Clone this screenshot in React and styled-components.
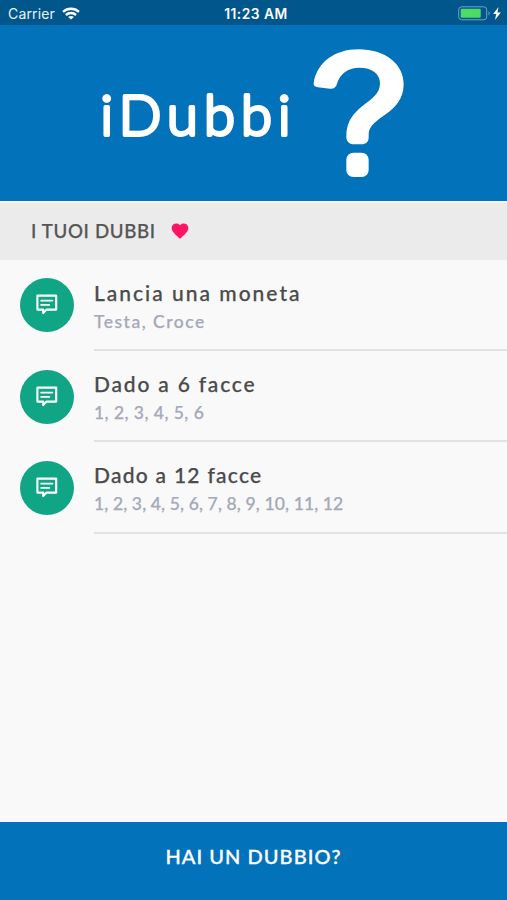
import React from "react";
import styled, { createGlobalStyle } from "styled-components";
import { MdFavorite } from "react-icons/md";

const GlobalStyle = createGlobalStyle`
  * {
    box-sizing: border-box;
  }

  body {
    margin: 0;
    background-color: #f9f9f9;
  }
`;

const MainContainer = styled.div`
  display: flex;
  flex-direction: column;
  height: 900px;
  overflow: hidden;
  background-color: #f9f9f9;
  font-family: Lato, "Open Sans", sans-serif;
`;

const StatusBar = styled.div`
  display: grid;
  grid-template-columns: 1fr auto 1fr;
  align-items: center;
  height: 25px;
  flex: none;
  padding: 2px 5px 0 8px;
  background-color: #01568c;
  color: #e9f3fa;
  font-family: Inter, sans-serif;
  font-size: 14px;
`;

const Carrier = styled.div`
  display: flex;
  align-items: center;
  gap: 7px;
  letter-spacing: 0.15px;
`;

const Time = styled.span`
  padding-left: 2px;
  color: white;
  font-size: 13.8px;
  font-weight: 600;
  letter-spacing: 0.5px;
`;

const Battery = styled.div`
  display: flex;
  justify-content: flex-end;
`;

const Header = styled.header`
  display: flex;
  justify-content: center;
  height: 176px;
  flex: none;
  background-color: #0272ba;
`;

const Section = styled.div`
  display: flex;
  align-items: center;
  gap: 14px;
  height: 59px;
  flex: none;
  padding: 0 31px 1px;
  border-top: 2px solid #f3f5f7;
  background-color: #ebebeb;
  color: #555;

  svg {
    color: #ff1464;
  }
`;

const SectionTitle = styled.h2`
  margin: 0;
  font-size: 18.7px;
  font-weight: 500;
  letter-spacing: 0.65px;
  white-space: nowrap;
  -webkit-text-stroke: 0.25px;
`;

const List = styled.ul`
  flex: 1;
  margin: 0;
  padding: 0;
  list-style: none;
`;

const Item = styled.li`
  display: flex;
  height: 91.2px;
  padding-left: 20px;
`;

const Avatar = styled.div`
  display: flex;
  align-items: center;
  justify-content: center;
  width: 54px;
  height: 54px;
  flex: none;
  margin: 18.4px 20px 0 0;
  border-radius: 50%;
  background-color: #10a585;
`;

const ItemBody = styled.div`
  flex: 1;
  padding-top: 20px;
  border-bottom: 2px solid #e2e2e3;
  white-space: nowrap;
  -webkit-text-stroke: 0.25px;
`;

const ItemTitle = styled.div`
  color: #4b4b4b;
  font-size: 21px;
  font-weight: 500;
  line-height: 26px;
  letter-spacing: ${(props) => props.$spacing}px;
`;

const ItemText = styled.div`
  margin-top: 5px;
  color: #a5a9b8;
  font-size: 17.5px;
  font-weight: 500;
  line-height: 22px;
  letter-spacing: ${(props) => props.$spacing}px;
`;

const Footer = styled.button`
  height: 78px;
  flex: none;
  padding: 0 0 10px;
  border: none;
  background-color: #0272ba;
  color: white;
  font-family: inherit;
  font-size: 20px;
  font-weight: 500;
  letter-spacing: 1.05px;
  -webkit-text-stroke: 0.35px;
`;

const Logo = styled.div`
  display: flex;
  align-items: flex-start;
  width: 310px;
  padding-top: 15px;
  color: white;

  svg {
    flex: none;
  }
`;

const LogoText = styled.svg`
  width: 202px;
  height: 130px;

  text {
    font-size: 56px;
    font-weight: 300;
    fill: white;
    stroke: white;
    stroke-width: 3.8;
    stroke-linejoin: round;
  }
`;

const items = [
  { title: "Lancia una moneta", text: "Testa, Croce", spacing: 2, textSpacing: 1.5 },
  { title: "Dado a 6 facce", text: "1, 2, 3, 4, 5, 6", spacing: 1.8, textSpacing: 0.45 },
  {
    title: "Dado a 12 facce",
    text: "1, 2, 3, 4, 5, 6, 7, 8, 9, 10, 11, 12",
    spacing: 1.27,
    textSpacing: 0.12,
  },
];

const WifiIcon = () => (
  <svg width="18" height="13" viewBox="0 0 18 13" fill="none" stroke="white" strokeWidth="2.4">
    <path d="M1 4.8C5.5.7 12.5.7 17 4.8" />
    <path d="M3.9 8c2.9-2.6 7.3-2.6 10.2 0" />
    <path d="M9 12.6L6.1 10c1.6-1.5 4.2-1.5 5.8 0z" fill="white" stroke="none" />
  </svg>
);

const BatteryIcon = () => (
  <svg width="44" height="15" viewBox="0 0 44 15">
    <rect x=".7" y=".8" width="28" height="13" rx="3" fill="none" stroke="#6fa3c6" />
    <rect x="2.7" y="2.8" width="20" height="9" rx="1" fill="#4cdc64" />
    <path d="M30.5 5.2c1.6.7 1.6 3.5 0 4.2z" fill="#6fa3c6" />
    <path d="M40.5 1l-5.4 7h3.1L37 14l5.8-7.6h-3.3z" fill="white" />
  </svg>
);

const MessageIcon = () => (
  <svg width="22" height="22" viewBox="0 0 22 22" fill="none" stroke="white" strokeWidth="2.1">
    <path d="M1.4 1.6h18.8v14h-9.6l-3.4 3.5v-3.5H1.4z" strokeLinejoin="round" />
    <path d="M5.2 6.6h11.2M5.2 10.9h8" strokeLinecap="round" strokeWidth="1.9" />
  </svg>
);

const HelpIcon = () => (
  <svg width="120" height="150" viewBox="0 0 360 450" fill="currentColor">
    <path d="M38 130C47 68 100 28 173 28c78 0 135 43 135 105 0 91-105 96-105 151v8c0 14-8 21-22 21h-20c-16 0-25-9-25-23 0-98 101-97 101-160 0-29-24-47-62-47-36 0-58 19-67 48-3 11-10 16-21 15l-36-4c-9-1-14-5-13-12z" />
    <rect x="136" y="338" width="67" height="73" rx="21" />
  </svg>
);

const HomePage = () => {
  return (
    <MainContainer>
      <StatusBar>
        <Carrier>
          Carrier
          <WifiIcon />
        </Carrier>
        <Time>11:23 AM</Time>
        <Battery>
          <BatteryIcon />
        </Battery>
      </StatusBar>
      <Header>
        <Logo>
          <LogoText viewBox="0 0 202 130">
            <text x="1.5" y="94.5" textLength="190">
              iDubbi
            </text>
          </LogoText>
          <HelpIcon />
        </Logo>
      </Header>
      <Section>
        <SectionTitle>I TUOI DUBBI</SectionTitle>
        <MdFavorite size={20} />
      </Section>
      <List>
        {items.map((item) => (
          <Item key={item.title}>
            <Avatar>
              <MessageIcon />
            </Avatar>
            <ItemBody>
              <ItemTitle $spacing={item.spacing}>{item.title}</ItemTitle>
              <ItemText $spacing={item.textSpacing}>{item.text}</ItemText>
            </ItemBody>
          </Item>
        ))}
      </List>
      <Footer>HAI UN DUBBIO?</Footer>
    </MainContainer>
  );
};

const App = () => (
  <>
    <GlobalStyle />
    <HomePage />
  </>
);

export default App;
